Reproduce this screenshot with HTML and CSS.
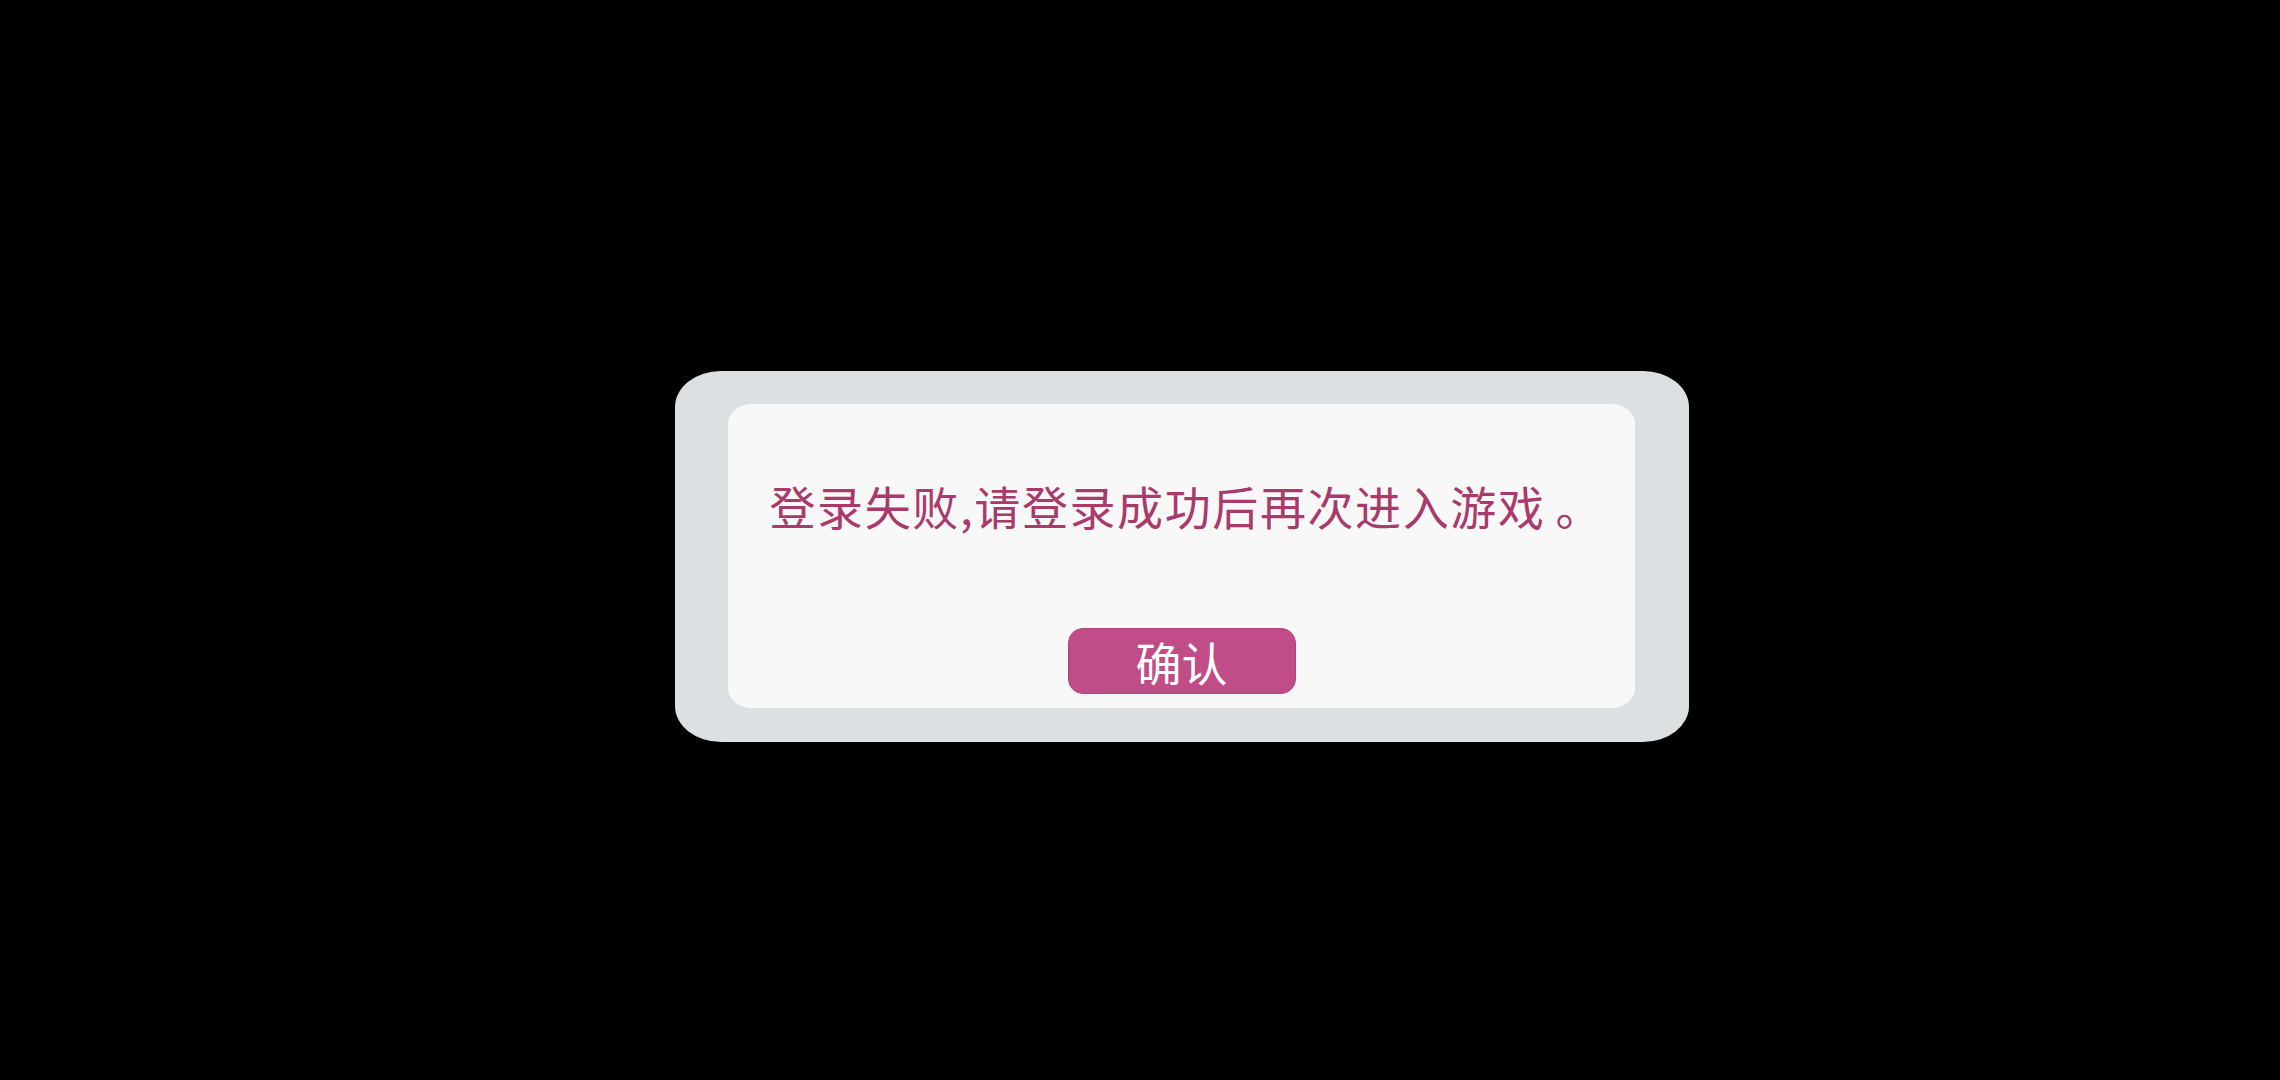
FILE: index.html
```html
<!DOCTYPE html>
<html lang="zh-CN">
<head>
<meta charset="utf-8">
<title>登录失败</title>
<link rel="stylesheet" href="styles.css">
</head>
<body>
<div class="stage">
  <div class="dialog">
    <div class="panel">
      <p class="message">登录失败,请登录成功后再次进入游戏<span class="stop">。</span></p>
      <button class="confirm" type="button">确认</button>
    </div>
  </div>
</div>
</body>
</html>
```

FILE: styles.css
```css
html, body {
  margin: 0;
  padding: 0;
  background: #000000;
  width: 2280px;
  height: 1080px;
  overflow: hidden;
}

.stage {
  box-sizing: border-box;
  width: 2280px;
  height: 1080px;
  padding: 371px 0 0 675px;
  font-family: "Noto Sans CJK SC", "Noto Sans", sans-serif;
}

.dialog {
  box-sizing: border-box;
  width: 1014px;
  height: 371px;
  padding: 33px 54px 34px 53px;
  background: #dbe0e2;
  border-radius: 46px / 36px;
}

.panel {
  box-sizing: border-box;
  width: 907px;
  height: 304px;
  background: #f8f8f8;
  border-radius: 24px / 20px;
  display: flex;
  flex-direction: column;
  align-items: center;
  padding: 0 0 14px 0;
}

.message {
  margin: 77px 0 0 0;
  padding-left: 8px;
  font-size: 46px;
  line-height: 48px;
  letter-spacing: 1.6px;
  color: #a93a6b;
  white-space: nowrap;
}

.stop {
  display: inline-block;
  margin-left: 10px;
  letter-spacing: 0;
}

.confirm {
  margin-top: auto;
  width: 228px;
  height: 66px;
  border: 1px solid #b2437c;
  border-radius: 15px;
  background: #c04c88;
  color: #ffffff;
  font-family: "Noto Sans CJK SC", "Noto Sans", sans-serif;
  font-size: 46px;
  line-height: 60px;
  padding: 0;
}
```
